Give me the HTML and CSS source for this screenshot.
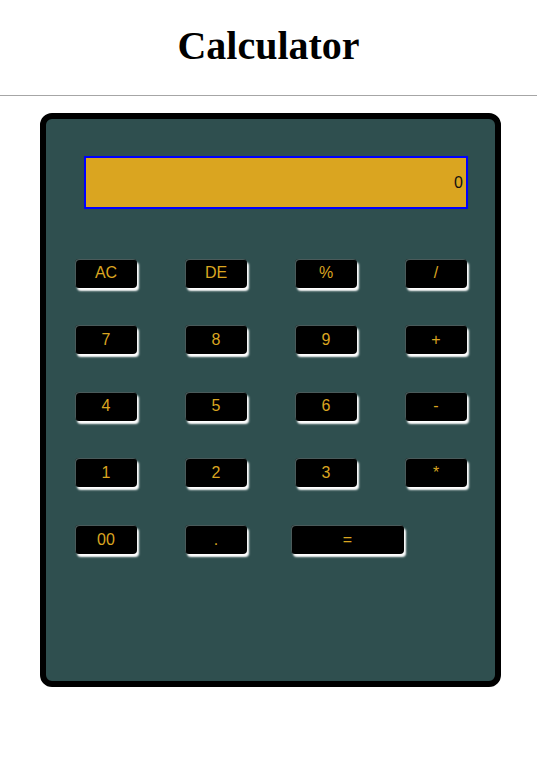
FILE: index.html
```html
<!DOCTYPE html>
<html lang="en">
<head>
<meta charset="utf-8">
<title>Calculator</title>
<link rel="stylesheet" href="styles.css">
</head>
<body>
<header class="page-header">
  <h1 class="title">Calculator</h1>
</header>
<main class="calculator">
  <div class="display">0</div>
  <div class="keypad">
    <button class="key">AC</button>
    <button class="key">DE</button>
    <button class="key">%</button>
    <button class="key">/</button>
    <button class="key">7</button>
    <button class="key">8</button>
    <button class="key">9</button>
    <button class="key">+</button>
    <button class="key">4</button>
    <button class="key">5</button>
    <button class="key">6</button>
    <button class="key">-</button>
    <button class="key">1</button>
    <button class="key">2</button>
    <button class="key">3</button>
    <button class="key">*</button>
    <button class="key">00</button>
    <button class="key">.</button>
    <button class="key key-wide">=</button>
  </div>
</main>
</body>
</html>
```

FILE: styles.css
```css
html, body {
  margin: 0;
  padding: 0;
  background: #ffffff;
}

.page-header {
  height: 96px;
  box-sizing: border-box;
  padding-top: 23px;
  border-bottom: 1px solid #a6a6a6;
}

.title {
  margin: 0;
  font-family: "Liberation Serif", "Times New Roman", serif;
  font-weight: bold;
  font-size: 40px;
  line-height: 46px;
  text-align: center;
  color: #000;
}

.calculator {
  display: block;
  box-sizing: border-box;
  width: 461px;
  height: 574px;
  margin: 17px 0 0 40px;
  padding: 37px 0 0 29px;
  background: #2f4f4f;
  border: 6px solid #000;
  border-radius: 12px;
}

.display {
  box-sizing: border-box;
  width: 384px;
  height: 53px;
  margin-left: 9px;
  padding: 0 3px;
  border: 2px solid #0000ff;
  background: #daa520;
  display: flex;
  align-items: center;
  justify-content: flex-end;
  font-family: "Liberation Sans", Arial, sans-serif;
  font-size: 16px;
  color: #111;
}

.keypad {
  margin-top: 49.5px;
  display: grid;
  grid-template-columns: repeat(4, 62px);
  grid-auto-rows: 29px;
  column-gap: 48px;
  row-gap: 37.67px;
}

.key {
  margin: 0;
  padding: 0;
  width: 62px;
  height: 29px;
  border: none;
  border-radius: 4px;
  background: #000;
  color: #daa520;
  font-family: "Liberation Sans", Arial, sans-serif;
  font-size: 16px;
  box-shadow: inset 1px 1px 0 #4a5a5a, 2px 3px 2px #ffffff;
  cursor: pointer;
}

.key-wide {
  width: 113px;
  margin-left: -4px;
}
```
